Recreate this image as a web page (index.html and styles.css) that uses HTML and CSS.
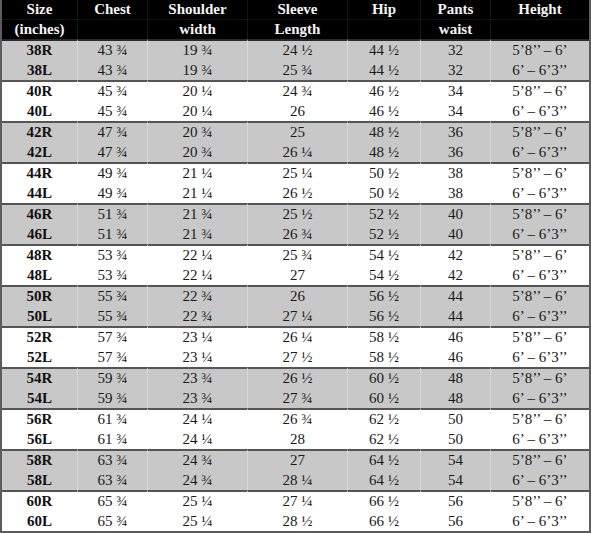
FILE: index.html
```html
<!DOCTYPE html>
<html lang="en">
<head>
<meta charset="utf-8">
<title>Size chart</title>
<link rel="stylesheet" href="styles.css">
</head>
<body>
<table class="chart">
  <colgroup>
    <col class="c-size"><col class="c-chest"><col class="c-shoulder"><col class="c-sleeve"><col class="c-hip"><col class="c-waist"><col class="c-height">
  </colgroup>
  <thead>
    <tr class="h1"><th>Size</th><th>Chest</th><th>Shoulder</th><th>Sleeve</th><th>Hip</th><th>Pants</th><th>Height</th></tr>
    <tr class="h2"><th>(inches)</th><th></th><th>width</th><th>Length</th><th></th><th>waist</th><th></th></tr>
  </thead>
  <tbody class="grey">
    <tr><th>38R</th><td>43 ¾</td><td>19 ¾</td><td>24 ½</td><td>44 ½</td><td>32</td><td>5’8’’ – 6’</td></tr>
    <tr><th>38L</th><td>43 ¾</td><td>19 ¾</td><td>25 ¾</td><td>44 ½</td><td>32</td><td>6’ – 6’3’’</td></tr>
  </tbody>
  <tbody class="white">
    <tr><th>40R</th><td>45 ¾</td><td>20 ¼</td><td>24 ¾</td><td>46 ½</td><td>34</td><td>5’8’’ – 6’</td></tr>
    <tr><th>40L</th><td>45 ¾</td><td>20 ¼</td><td>26</td><td>46 ½</td><td>34</td><td>6’ – 6’3’’</td></tr>
  </tbody>
  <tbody class="grey">
    <tr><th>42R</th><td>47 ¾</td><td>20 ¾</td><td>25</td><td>48 ½</td><td>36</td><td>5’8’’ – 6’</td></tr>
    <tr><th>42L</th><td>47 ¾</td><td>20 ¾</td><td>26 ¼</td><td>48 ½</td><td>36</td><td>6’ – 6’3’’</td></tr>
  </tbody>
  <tbody class="white">
    <tr><th>44R</th><td>49 ¾</td><td>21 ¼</td><td>25 ¼</td><td>50 ½</td><td>38</td><td>5’8’’ – 6’</td></tr>
    <tr><th>44L</th><td>49 ¾</td><td>21 ¼</td><td>26 ½</td><td>50 ½</td><td>38</td><td>6’ – 6’3’’</td></tr>
  </tbody>
  <tbody class="grey">
    <tr><th>46R</th><td>51 ¾</td><td>21 ¾</td><td>25 ½</td><td>52 ½</td><td>40</td><td>5’8’’ – 6’</td></tr>
    <tr><th>46L</th><td>51 ¾</td><td>21 ¾</td><td>26 ¾</td><td>52 ½</td><td>40</td><td>6’ – 6’3’’</td></tr>
  </tbody>
  <tbody class="white">
    <tr><th>48R</th><td>53 ¾</td><td>22 ¼</td><td>25 ¾</td><td>54 ½</td><td>42</td><td>5’8’’ – 6’</td></tr>
    <tr><th>48L</th><td>53 ¾</td><td>22 ¼</td><td>27</td><td>54 ½</td><td>42</td><td>6’ – 6’3’’</td></tr>
  </tbody>
  <tbody class="grey">
    <tr><th>50R</th><td>55 ¾</td><td>22 ¾</td><td>26</td><td>56 ½</td><td>44</td><td>5’8’’ – 6’</td></tr>
    <tr><th>50L</th><td>55 ¾</td><td>22 ¾</td><td>27 ¼</td><td>56 ½</td><td>44</td><td>6’ – 6’3’’</td></tr>
  </tbody>
  <tbody class="white">
    <tr><th>52R</th><td>57 ¾</td><td>23 ¼</td><td>26 ¼</td><td>58 ½</td><td>46</td><td>5’8’’ – 6’</td></tr>
    <tr><th>52L</th><td>57 ¾</td><td>23 ¼</td><td>27 ½</td><td>58 ½</td><td>46</td><td>6’ – 6’3’’</td></tr>
  </tbody>
  <tbody class="grey">
    <tr><th>54R</th><td>59 ¾</td><td>23 ¾</td><td>26 ½</td><td>60 ½</td><td>48</td><td>5’8’’ – 6’</td></tr>
    <tr><th>54L</th><td>59 ¾</td><td>23 ¾</td><td>27 ¾</td><td>60 ½</td><td>48</td><td>6’ – 6’3’’</td></tr>
  </tbody>
  <tbody class="white">
    <tr><th>56R</th><td>61 ¾</td><td>24 ¼</td><td>26 ¾</td><td>62 ½</td><td>50</td><td>5’8’’ – 6’</td></tr>
    <tr><th>56L</th><td>61 ¾</td><td>24 ¼</td><td>28</td><td>62 ½</td><td>50</td><td>6’ – 6’3’’</td></tr>
  </tbody>
  <tbody class="grey">
    <tr><th>58R</th><td>63 ¾</td><td>24 ¾</td><td>27</td><td>64 ½</td><td>54</td><td>5’8’’ – 6’</td></tr>
    <tr><th>58L</th><td>63 ¾</td><td>24 ¾</td><td>28 ¼</td><td>64 ½</td><td>54</td><td>6’ – 6’3’’</td></tr>
  </tbody>
  <tbody class="white">
    <tr><th>60R</th><td>65 ¾</td><td>25 ¼</td><td>27 ¼</td><td>66 ½</td><td>56</td><td>5’8’’ – 6’</td></tr>
    <tr><th>60L</th><td>65 ¾</td><td>25 ¼</td><td>28 ½</td><td>66 ½</td><td>56</td><td>6’ – 6’3’’</td></tr>
  </tbody>
</table>
</body>
</html>
```

FILE: styles.css
```css
html, body {
  margin: 0;
  padding: 0;
  background: #ffffff;
}

body {
  font-family: "Liberation Serif";
}

.chart {
  width: 591px;
  table-layout: fixed;
  border-collapse: separate;
  border-spacing: 0;
  border-left: 2px solid #5c5c5c;
  border-right: 2px solid #5c5c5c;
  border-bottom: 2px solid #5c5c5c;
  font-family: "Liberation Serif";
  font-size: 15px;
  color: #1a1a1a;
}

.c-size { width: 75px; }
.c-chest { width: 70px; }
.c-shoulder { width: 100px; }
.c-sleeve { width: 100px; }
.c-hip { width: 73px; }
.c-waist { width: 70px; }
.c-height { width: 99px; }

.chart th,
.chart td {
  padding: 0;
  text-align: center;
  white-space: nowrap;
  line-height: 19.5px;
  font-family: "Liberation Serif";
  font-size: 15px;
}

.chart td,
.chart th + th {
  border-left: 1px solid rgba(255, 255, 255, 0.3);
}

.chart thead th {
  background: #000000;
  color: #f4f4f4;
  font-weight: bold;
}

.chart thead th + th {
  border-left: 1px solid #161616;
}

.chart thead .h1 th {
  line-height: 18.5px;
  border-bottom: 1px solid #141414;
}

.chart tbody th {
  font-weight: bold;
  color: #111111;
}

.chart tbody tr:first-child th,
.chart tbody tr:first-child td {
  border-top: 2px solid #555555;
}

.chart tbody:first-of-type tr:first-child th,
.chart tbody:first-of-type tr:first-child td {
  border-top-color: #2a2a2a;
}

.grey th,
.grey td {
  background: #c8c8c8;
}

.white th,
.white td {
  background: #ffffff;
}
```
